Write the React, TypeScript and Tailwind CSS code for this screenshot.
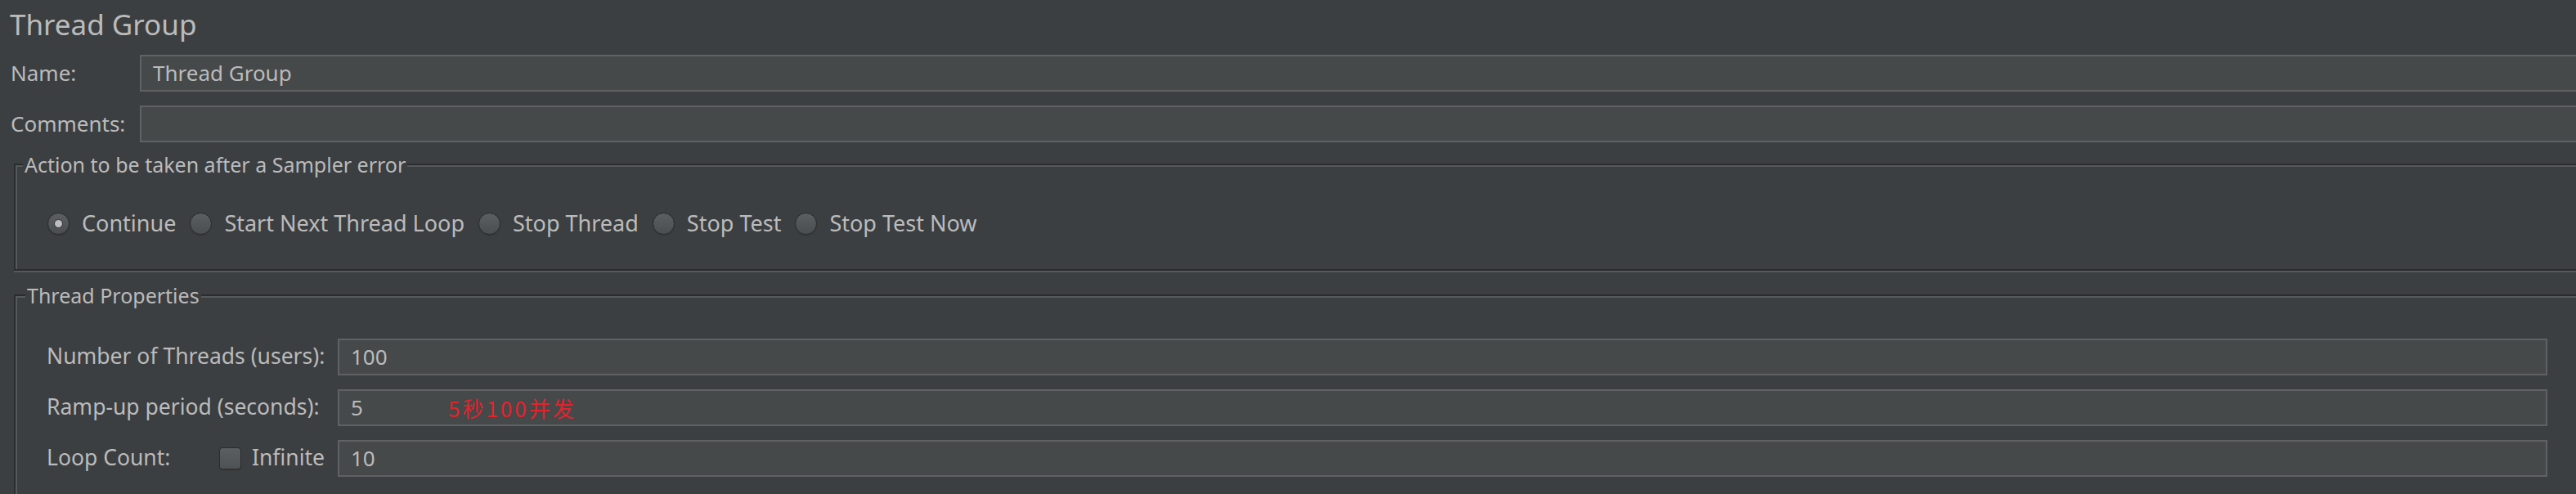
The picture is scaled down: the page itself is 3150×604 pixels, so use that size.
import React from 'react';

// JMeter "Thread Group" panel, Darcula look
const errorActions = ['Continue', 'Start Next Thread Loop', 'Stop Thread', 'Stop Test', 'Stop Test Now'];

function Radio({ checked }: { checked?: boolean }) {
  return (
    <span className="flex h-[27px] w-[27px] shrink-0 items-center justify-center rounded-full border border-[#2a2c2e] bg-linear-to-b from-[#5c5f61] to-[#4b4e50] shadow-[0_1px_1px_#333537]">
      {checked && <span className="h-[9px] w-[9px] rounded-full bg-[#bdbdbd] shadow-[0_0_0_1px_#3a3c3e]" />}
    </span>
  );
}

function CheckBox() {
  return (
    <span className="block h-[27px] w-[27px] shrink-0 rounded-[4px] border border-[#2a2c2e] bg-linear-to-b from-[#5c5f61] to-[#4f5254] shadow-[0_1px_1px_#333537]" />
  );
}

function Field({ children, edge }: { children?: React.ReactNode; edge?: boolean }) {
  return (
    <div
      className={
        'flex h-[45px] flex-1 items-center border-2 border-[#5f6163] bg-[#45494a] pl-[14px] text-[26px] ' +
        (edge ? 'border-r-0' : '')
      }
    >
      {children}
    </div>
  );
}

export default function App() {
  return (
    <div className="h-[604px] w-full overflow-hidden bg-[#3c3f41] font-['Noto_Sans',sans-serif] text-[26px] text-[#bbbbbb]">
      <div className="pl-[12px] pt-[10px] text-[35px] leading-[40px]">Thread Group</div>

      <div className="mt-[17px] flex flex-col gap-[17px] pl-[13px]">
        <div className="flex items-center">
          <span className="w-[158px] shrink-0">Name:</span>
          <Field edge>Thread Group</Field>
        </div>
        <div className="flex items-center">
          <span className="w-[158px] shrink-0">Comments:</span>
          <Field edge />
        </div>
      </div>

      <fieldset className="ml-[17px] mt-[12px] border-2 border-r-0 border-[#2a2c2e] shadow-[inset_2px_2px_0_#56595b,0_2px_0_#56595b]">
        <legend className="ml-[9px] bg-[#3c3f41] px-[2px] text-[25px] leading-[30px]">
          Action to be taken after a Sampler error
        </legend>
        <div className="flex items-center pb-[35px] pl-[39px] pt-[37px] text-[27px]">
          {errorActions.map((label, i) => (
            <div key={label} className="mr-[17px] flex items-center gap-[15px]">
              <Radio checked={i === 0} />
              <span>{label}</span>
            </div>
          ))}
        </div>
      </fieldset>

      <fieldset className="ml-[17px] mt-[15px] border-2 border-r-0 border-b-0 border-[#2a2c2e] shadow-[inset_2px_2px_0_#56595b]">
        <legend className="ml-[12px] bg-[#3c3f41] px-[2px] text-[25px] leading-[30px]">Thread Properties</legend>
        <div className="flex flex-col gap-[17px] pl-[38px] pr-[35px] pt-[38px] text-[26.5px]">
          <div className="flex items-center gap-[16px]">
            <span className="w-[340px] shrink-0 whitespace-nowrap">Number of Threads (users):</span>
            <Field>100</Field>
          </div>
          <div className="flex items-center gap-[16px]">
            <span className="w-[340px] shrink-0 whitespace-nowrap">Ramp-up period (seconds):</span>
            <Field>
              <span className="w-[119px] shrink-0">5</span>
              <span className="font-['Noto_Sans_CJK_SC',sans-serif] text-[26px] tracking-[3px] text-[#e3232c]">
                5秒100并发
              </span>
            </Field>
          </div>
          <div className="flex items-center gap-[16px]">
            <div className="flex w-[340px] shrink-0 items-center whitespace-nowrap">
              <span className="flex-1">Loop Count:</span>
              <CheckBox />
              <span className="ml-[13px]">Infinite</span>
            </div>
            <Field>10</Field>
          </div>
          <div className="flex items-center gap-[14px] pl-[6px]">
            <CheckBox />
            <span>Delay Thread creation until needed</span>
          </div>
        </div>
      </fieldset>
    </div>
  );
}
